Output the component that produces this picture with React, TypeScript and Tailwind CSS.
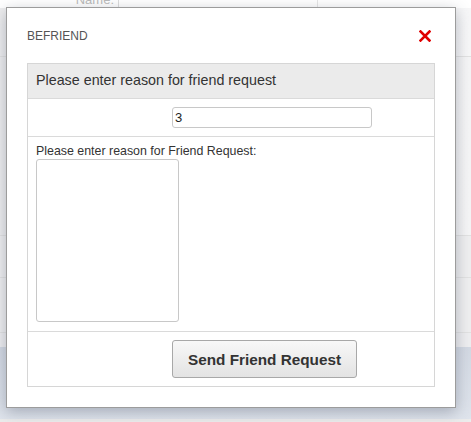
import React from "react";

export default function App() {
  return (
    <div className="relative w-[471px] h-[422px] overflow-hidden bg-[#f4f4f5] font-['Liberation_Sans',Arial,sans-serif]">
      {/* page behind the dialog */}
      <div className="flex flex-col h-full">
        <div className="flex h-[8px] bg-white">
          <div className="w-[119px] border-r border-[#dcdcdc] flex justify-end pr-[4px]">
            <span className="text-[13px] leading-[4px] text-[#bbb] -mt-[2px]">Name:</span>
          </div>
          <div className="w-[199px] border-r border-[#e6e6e6]" />
          <div className="flex-1" />
        </div>
        <div className="h-[49px] bg-gradient-to-r from-[#eeeeef] to-[#f7f7f8] border-b border-[#e2e2e2]" />
        <div className="h-[179px] bg-gradient-to-r from-[#eeeeef] to-[#f5f5f6] border-b border-[#e2e2e2]" />
        <div className="h-[42px] bg-[#efeff0] border-b border-[#e2e2e2]" />
        <div className="h-[55px] bg-[#efeff0] border-b border-[#e2e2e2]" />
        <div className="h-[14px] bg-[#eeeef0]" />
        <div className="flex-1 bg-gradient-to-b from-[#d3d9e3] to-[#dfe4ec] border-b-[3px] border-[#ececec]" />
      </div>

      {/* dialog */}
      <div className="absolute left-[6px] top-[7px] w-[450px] h-[401px] bg-white border border-[#9c9c9c] shadow-[0_4px_14px_rgba(60,70,90,0.35)]">
        <div className="flex items-center justify-between h-[55px] pl-[20px] pr-[24px]">
          <span className="text-[12px] text-[#555]">BEFRIEND</span>
          <svg width="12" height="12" viewBox="0 0 12 12">
            <path d="M1.5 1.5 L10.5 10.5 M10.5 1.5 L1.5 10.5" stroke="#e00000" strokeWidth="2.6" strokeLinecap="square" />
          </svg>
        </div>

        <div className="mx-[20px] border border-[#d6d6d6]">
          <div className="h-[35px] bg-[#ebebeb] border-b border-[#dadada] flex items-center pl-[8px]">
            <span className="text-[14.3px] text-[#333]">Please enter reason for friend request</span>
          </div>
          <div className="h-[38px] border-b border-[#dadada] flex items-center pl-[144px]">
            <input
              defaultValue="3"
              className="w-[200px] h-[21px] border border-[#c8c8c8] rounded-[3px] px-[2px] text-[13px] text-[#222] outline-none font-['Liberation_Sans',Arial,sans-serif]"
            />
          </div>
          <div className="h-[195px] border-b border-[#dadada] pl-[8px] pt-[7px]">
            <div className="text-[12.4px] leading-[15px] text-[#333]">Please enter reason for Friend Request:</div>
            <textarea className="w-[143px] h-[163px] border border-[#c8c8c8] rounded-[3px] resize-none outline-none block" />
          </div>
          <div className="h-[54px] flex items-center pl-[144px]">
            <button className="w-[185px] h-[38px] border border-[#a8a8a8] rounded-[3px] bg-gradient-to-b from-[#f8f8f8] to-[#e3e3e3] text-[15.3px] font-bold text-[#333] pt-[2px] font-['Liberation_Sans',Arial,sans-serif]">
              Send Friend Request
            </button>
          </div>
        </div>
      </div>
    </div>
  );
}
